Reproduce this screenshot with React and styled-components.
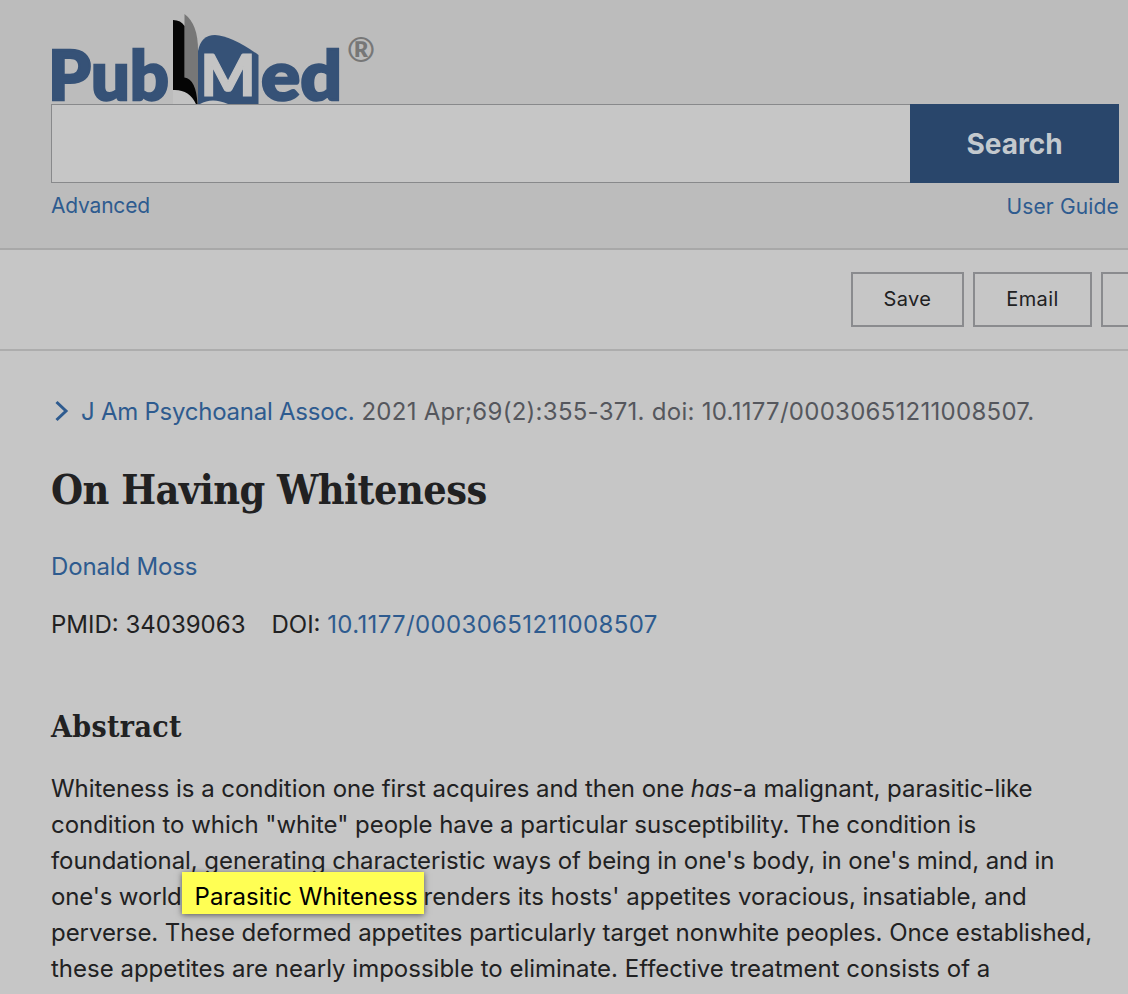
import React from 'react'
import styled, { createGlobalStyle } from 'styled-components'

const GlobalStyle = createGlobalStyle`
  * {
    box-sizing: border-box;
  }
  body {
    margin: 0;
    background: #c6c6c6;
    color: #212122;
    font-family: Inter, "Liberation Sans", sans-serif;
    overflow: hidden;
  }
  h1, h2, p {
    margin: 0;
  }
  a {
    color: #2e5b8f;
    text-decoration: none;
  }
`;

const Page = styled.div`
  width: 1128px;
  height: 994px;
  overflow: hidden;
`;

const Header = styled.header`
  height: 250px;
  padding: 12px 9px 0 51px;
  background: #bcbcbc;
  border-bottom: 2px solid #a8a8a8;
`;

const LogoImage = styled.svg`
  display: block;
  width: 330px;
  height: 92px;
  overflow: visible;
  font-family: Lato, "Open Sans", sans-serif;
  font-weight: 900;
`;

const SearchForm = styled.div`
  display: flex;
  height: 79px;
`;

const SearchInput = styled.input`
  flex: 1;
  min-width: 0;
  border: 1px solid #88898b;
  border-right: 0;
  border-radius: 0;
  background: #c6c6c6;
  outline: none;
`;

const SearchButton = styled.button`
  width: 209px;
  padding: 0;
  border: 0;
  background: #29466b;
  color: #c3c9ce;
  font: 700 28px Inter, sans-serif;
`;

const SearchLinks = styled.div`
  display: flex;
  justify-content: space-between;
  padding-top: 8px;
  font-size: 21px;
  line-height: 30px;
  a:last-child {
    padding-top: 1px;
  }
`;

const Toolbar = styled.div`
  display: flex;
  gap: 9px;
  height: 101px;
  padding: 22px 0 0 851px;
  border-bottom: 2px solid #adadad;
`;

const ToolButton = styled.button`
  flex: none;
  width: ${({ $width }) => $width}px;
  height: 55px;
  padding: 0 0 2px;
  border: 2px solid #8a8b8e;
  background: transparent;
  color: #212122;
  font: 400 20px Inter, sans-serif;
  letter-spacing: 0.4px;
`;

const Article = styled.main`
  padding: 42px 0 0 51px;
`;

const Tracked = styled.span`
  letter-spacing: ${({ $spacing }) => $spacing}px;
`;

const Citation = styled.div`
  display: flex;
  align-items: center;
  height: 36px;
  color: #55575d;
  font-size: 24px;
  white-space: pre;
  svg {
    width: 30px;
    height: 24px;
  }
`;

const Title = styled.h1`
  margin-top: 33px;
  font: 700 41px/56px "DejaVu Serif Condensed", "DejaVu Serif", serif;
  letter-spacing: -0.55px;
  white-space: nowrap;
`;

const Author = styled.div`
  margin-top: 31px;
  font-size: 24px;
  line-height: 36px;
  letter-spacing: -0.15px;
`;

const Identifiers = styled.div`
  display: flex;
  gap: 26px;
  margin-top: 22px;
  font-size: 24px;
  line-height: 36px;
`;

const Heading = styled.h2`
  margin-top: 64px;
  font: 700 30px/40px "DejaVu Serif Condensed", "DejaVu Serif", serif;
  letter-spacing: 0.35px;
`;

const Abstract = styled.p`
  margin-top: 24px;
  font-size: 24px;
  line-height: 36px;
`;

const Line = styled.span`
  display: flex;
  height: 36px;
  white-space: pre;
  letter-spacing: ${({ $spacing }) => $spacing || 0}px;
`;

const Highlight = styled.mark`
  z-index: 1;
  width: 242px;
  height: 42px;
  margin-top: -7px;
  padding: 7px 0 0 13px;
  background: #ffff54;
  color: #000;
  box-shadow: 0 1px 6px rgba(0, 0, 0, 0.55);
`;

const Logo = () => (
  <LogoImage viewBox="51 12 330 92" role="img" aria-label="PubMed">
    <g fill="#365277">
      <text x="48" y="100" fontSize="68" textLength="121" lengthAdjust="spacingAndGlyphs" stroke="#365277" strokeWidth="2.4">Pub</text>
      <path d="M198 104V51Q201 35 215 35Q232 36 258.500 55V104Z" />
      <text x="261" y="100" fontSize="68" textLength="81" lengthAdjust="spacingAndGlyphs" stroke="#365277" strokeWidth="2.4">ed</text>
    </g>
    {/* open book pages */}
    <path d="M173 90Q189 89 196 104H173Z" fill="#c3c3c3" />
    <path d="M200 104Q212 97 228 104Z" fill="#c3c3c3" />
    <path d="M184.500 14Q198 24 198 50V104H196L184.500 78Z" fill="#777" />
    <path d="M173 20Q181 20 184.500 26V77.500Q196 79 197.500 104H196Q189 89 173 90Z" fill="#050505" />
    <text x="200.500" y="95.500" fontSize="58" fill="#c4c4c4" stroke="#c4c4c4" strokeWidth="1.200" textLength="55" lengthAdjust="spacingAndGlyphs">M</text>
    <text x="347" y="62" fontSize="34" fill="#777" fontWeight="700">®</text>
  </LogoImage>
)

const App = () => {
  return (
    <Page>
      <GlobalStyle />
      <Header>
        <Logo />
        <SearchForm>
          <SearchInput aria-label="Search PubMed" />
          <SearchButton>Search</SearchButton>
        </SearchForm>
        <SearchLinks>
          <a href="#advanced"><Tracked $spacing={-0.2}>Advanced</Tracked></a>
          <a href="#guide"><Tracked $spacing={0.15}>User Guide</Tracked></a>
        </SearchLinks>
      </Header>

      <Toolbar>
        <ToolButton $width={113}>Save</ToolButton>
        <ToolButton $width={119}>Email</ToolButton>
        <ToolButton $width={120} aria-label="Send to" />
      </Toolbar>

      <Article>
        <Citation>
          <svg viewBox="0 0 30 24" fill="none" stroke="#2e5b8f" strokeWidth="3">
            <path d="M5.500 3L15 12L5.500 21" />
          </svg>
          <a href="#journal"><Tracked $spacing={-0.25}>J Am Psychoanal Assoc.</Tracked></a>
          <Tracked $spacing={0.27}> 2021 Apr;69(2):355-371. doi: 10.1177/00030651211008507.</Tracked>
        </Citation>
        <Title>On Having Whiteness</Title>
        <Author><a href="#author">Donald Moss</a></Author>
        <Identifiers>
          <span>PMID: 34039063</span>
          <span>DOI: <a href="#doi"><Tracked $spacing={0.35}>10.1177/00030651211008507</Tracked></a></span>
        </Identifiers>
        <Heading>Abstract</Heading>
        <Abstract>
          <Line $spacing={-0.045}>Whiteness is a condition one first acquires and then one <em>has</em>-a malignant, parasitic-like</Line>
          <Line $spacing={-0.03}>condition to which "white" people have a particular susceptibility. The condition is</Line>
          <Line $spacing={-0.07}>foundational, generating characteristic ways of being in one's body, in one's mind, and in</Line>
          <Line $spacing={0.02}>
            <Tracked $spacing={-0.16}>one's world</Tracked>
            <Highlight>Parasitic Whiteness</Highlight>
            <span>renders its hosts' appetites voracious, insatiable, and</span>
          </Line>
          <Line $spacing={-0.06}>perverse. These deformed appetites particularly target nonwhite peoples. Once established,</Line>
          <Line>these appetites are nearly impossible to eliminate. Effective treatment consists of a</Line>
        </Abstract>
      </Article>
    </Page>
  )
}

export default App
